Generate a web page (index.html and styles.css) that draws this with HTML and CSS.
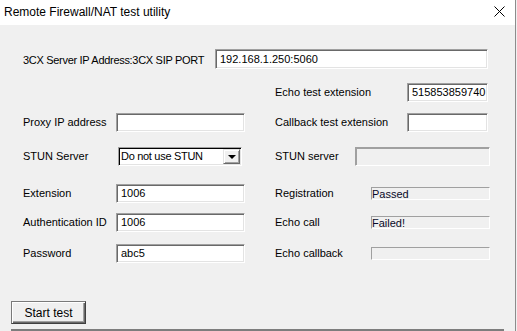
FILE: index.html
```html
<!DOCTYPE html>
<html lang="en">
<head>
    <meta charset="UTF-8">
    <meta name="viewport" content="width=device-width, initial-scale=1.0">
    <title>Remote Firewall/NAT test utility</title>
    <link rel="stylesheet" href="styles.css">
</head>
<body>
    <div class="window">
        <div class="titlebar">
            <span class="title">Remote Firewall/NAT test utility</span>
            <span class="close">
                <svg width="11" height="11" viewBox="0 0 11 11">
                    <path d="M0.5 0.5 L10.5 10.5 M10.5 0.5 L0.5 10.5" stroke="#000" stroke-width="1" fill="none"/>
                </svg>
            </span>
        </div>

        <div class="client">
            <div class="row row-1">
                <span class="label label-server">3CX Server IP Address:3CX SIP PORT</span>
                <input class="edit edit-server" value="192.168.1.250:5060">
            </div>

            <div class="row row-2">
                <div class="cell-left"></div>
                <div class="cell-right">
                    <span class="label">Echo test extension</span>
                    <input class="edit edit-short" value="515853859740">
                </div>
            </div>

            <div class="row row-3">
                <div class="cell-left">
                    <span class="label label-left">Proxy IP address</span>
                    <input class="edit edit-left" value="">
                </div>
                <div class="cell-right">
                    <span class="label">Callback test extension</span>
                    <input class="edit edit-short" value="">
                </div>
            </div>

            <div class="row row-4">
                <div class="cell-left">
                    <span class="label label-left">STUN Server</span>
                    <div class="combo">
                        <span class="combo-text">Do not use STUN</span>
                        <span class="combo-btn"><span class="arrow"></span></span>
                    </div>
                </div>
                <div class="cell-right">
                    <span class="label">STUN server</span>
                    <div class="edit edit-wide disabled"></div>
                </div>
            </div>

            <div class="row row-5">
                <div class="cell-left">
                    <span class="label label-left">Extension</span>
                    <input class="edit edit-left" value="1006">
                </div>
                <div class="cell-right">
                    <span class="label">Registration</span>
                    <div class="status">Passed</div>
                </div>
            </div>

            <div class="row row-6">
                <div class="cell-left">
                    <span class="label label-left">Authentication ID</span>
                    <input class="edit edit-left" value="1006">
                </div>
                <div class="cell-right">
                    <span class="label">Echo call</span>
                    <div class="status">Failed!</div>
                </div>
            </div>

            <div class="row row-7">
                <div class="cell-left">
                    <span class="label label-left">Password</span>
                    <input class="edit edit-left" value="abc5">
                </div>
                <div class="cell-right">
                    <span class="label">Echo callback</span>
                    <div class="status"></div>
                </div>
            </div>

            <div class="actions">
                <button class="btn">Start test</button>
            </div>
            <div class="bottom-edge"></div>
        </div>
    </div>
</body>
</html>
```

FILE: styles.css
```css
body {
    margin: 0;
    background: #f0f0f0;
    font-family: 'Liberation Sans', Arial, sans-serif;
    font-size: 11px;
    color: #000;
    overflow: hidden;
}

.window {
    width: 515px;
    height: 331px;
    border-right: 1px solid #8c8c8c;
    background: #f0f0f0;
}

.titlebar {
    height: 25px;
    background: #fff;
    display: flex;
    align-items: center;
    justify-content: space-between;
}

.title {
    font-size: 12px;
    padding-left: 4px;
    padding-bottom: 1px;
}

.close {
    display: flex;
    margin-right: 10px;
    margin-bottom: 2px;
}

.client {
    padding-top: 24px;
    padding-left: 23px;
}

.row {
    display: flex;
    align-items: center;
    height: 20px;
}

.row-1 .label { padding-top: 2px; }
.row-2 { margin-top: 13px; }
.row-3 { margin-top: 10px; }
.row-4 { margin-top: 14px; }
.row-5 { margin-top: 17px; }
.row-6 { margin-top: 9px; }
.row-7 { margin-top: 11px; }

.cell-left {
    width: 252px;
    display: flex;
    align-items: center;
}

.cell-right {
    width: 215px;
    display: flex;
    align-items: center;
    justify-content: space-between;
}

.label-server {
    width: 192px;
    letter-spacing: -0.3px;
}

.label-left {
    width: 93px;
}

.edit {
    box-sizing: border-box;
    height: 20px;
    padding: 0 0 0 4px;
    margin: 0;
    font-family: 'Liberation Sans', Arial, sans-serif;
    font-size: 11px;
    color: #000;
    background: #fff;
    border: 1px solid;
    border-color: #a0a0a0 #fff #fff #a0a0a0;
    box-shadow: inset 1px 1px #696969, inset -1px -1px #e3e3e3;
    outline: none;
}

.edit-server {
    width: 273px;
}

.edit-left {
    width: 129px;
    height: 19px;
}

.edit-short {
    width: 81px;
    height: 19px;
    margin-right: 2px;
}

.edit-wide {
    width: 135px;
    height: 19px;
}

.disabled {
    background: #f0f0f0;
    box-shadow: inset 1px 1px #a0a0a0, inset -1px -1px #f0f0f0;
}

.combo {
    box-sizing: border-box;
    width: 124px;
    height: 19px;
    margin-left: 2px;
    display: flex;
    align-items: center;
    justify-content: space-between;
    background: #fff;
    border: 1px solid;
    border-color: #a0a0a0 #fff #fff #a0a0a0;
    box-shadow: inset 1px 1px #000, inset -1px -1px #e3e3e3;
}

.combo-text {
    padding-left: 2px;
    font-size: 11px;
    letter-spacing: -0.3px;
}

.combo-btn {
    box-sizing: border-box;
    width: 17px;
    height: 15px;
    margin-right: 1px;
    display: flex;
    align-items: center;
    justify-content: center;
    background: #f0f0f0;
    border: 1px solid;
    border-color: #e3e3e3 #696969 #696969 #e3e3e3;
    box-shadow: inset 1px 1px #fff, inset -1px -1px #a0a0a0;
}

.arrow {
    width: 0;
    height: 0;
    border-left: 4px solid transparent;
    border-right: 4px solid transparent;
    border-top: 4px solid #000;
    margin-top: 1px;
}

.status {
    box-sizing: border-box;
    width: 119px;
    height: 13px;
    font-size: 11px;
    line-height: 11px;
    color: #0a0a28;
    padding-top: 1px;
    border: 1px solid;
    border-color: #a0a0a0 #fff #fff #a0a0a0;
}

.actions {
    margin-top: 38px;
    margin-left: -12px;
}

.btn {
    box-sizing: border-box;
    width: 75px;
    height: 23px;
    padding: 0;
    font-family: 'Liberation Sans', Arial, sans-serif;
    font-size: 12px;
    color: #000;
    background: #f0f0f0;
    border: 1px solid;
    border-color: #7a7a7a #404040 #404040 #7a7a7a;
    box-shadow: inset 1px 1px #fff, inset -1px -1px #696969, inset -2px -2px #a0a0a0;
}

.bottom-edge {
    margin-top: 5px;
    margin-left: -12px;
    width: 493px;
    height: 2px;
    background: #7d7d7d;
}
```
